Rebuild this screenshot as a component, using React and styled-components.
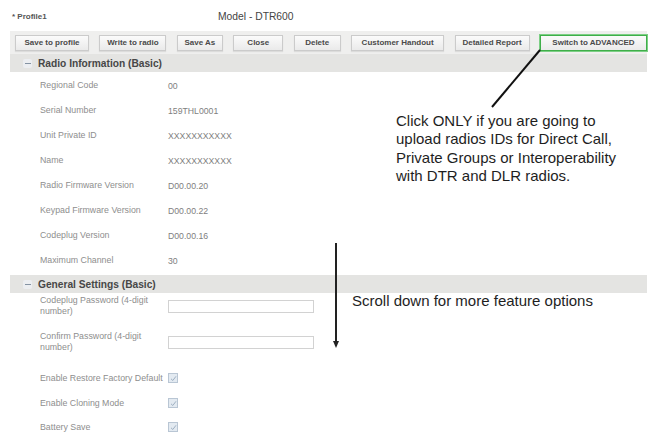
import React from "react";
import styled, { createGlobalStyle } from "styled-components";

const Global = createGlobalStyle`
  html, body { margin: 0; padding: 0; background: #ffffff; }
  body { font-family: "Liberation Sans", Arial, sans-serif; }
`;

const Page = styled.div`
  position: relative;
  width: 654px;
  height: 434px;
  overflow: hidden;
  background: #fff;
`;

const TitleRow = styled.div`
  display: grid;
  grid-template-columns: 206px auto;
  align-items: center;
  height: 31px;
  padding: 2px 0 0 12px;
  box-sizing: border-box;
`;

const ProfileName = styled.span`
  font-size: 8px;
  font-weight: bold;
  color: #555;
`;

const ModelName = styled.span`
  font-size: 10.3px;
  color: #444;
`;

const Content = styled.div`
  margin-left: 10px;
  width: 637px;
`;

const Toolbar = styled.div`
  display: flex;
  justify-content: space-between;
  align-items: center;
  height: 23px;
  padding: 0 0 0 5px;
  background: #efefee;
`;

const Button = styled.div`
  width: ${(p) => p.$w}px;
  height: 16px;
  box-sizing: border-box;
  display: flex;
  align-items: center;
  justify-content: center;
  font-size: 8px;
  font-weight: bold;
  color: #4a4a4a;
  background: linear-gradient(#fbfbfb, #eaeaea);
  border: 1px solid ${(p) => (p.$active ? "#3fae4a" : "#cbcbcb")};
  box-shadow: ${(p) => (p.$active ? "0 0 0 1px #7ccf84" : "0 1px 1px rgba(0,0,0,0.08)")};
  white-space: nowrap;
`;

const SectionHeader = styled.div`
  display: flex;
  align-items: center;
  gap: 6px;
  height: 18px;
  padding-left: 13px;
  background: #e4e4e2;
  font-size: 10.2px;
  font-weight: bold;
  color: #474747;
`;

const Toggle = styled.span`
  width: 9px;
  height: 9px;
  display: flex;
  align-items: center;
  justify-content: center;
  border-radius: 2px;
  background: #eceef1;
  &::after {
    content: "";
    width: 6px;
    height: 1px;
    background: #8593a3;
  }
`;

const Rows = styled.div`
  display: grid;
  grid-template-columns: 128px 1fr;
  grid-auto-rows: 25px;
  padding: 1px 0 2px 30px;
`;

const Label = styled.div`
  display: flex;
  align-items: center;
  font-size: 8.8px;
  line-height: 11px;
  color: #8e8e8e;
`;

const Value = styled.div`
  display: flex;
  align-items: center;
  font-size: 8.7px;
  color: #7e7e7e;
`;

const SettingsRows = styled.div`
  display: grid;
  grid-template-columns: 128px 1fr;
  grid-template-rows: 26px 46px 26px 24px 24px;
  padding-left: 30px;
`;

const WrapLabel = styled(Label)`
  padding-right: 14px;
`;

const Field = styled.div`
  display: flex;
  align-items: center;
`;

const TextInput = styled.div`
  width: 146px;
  height: 13px;
  box-sizing: border-box;
  border: 1px solid #d2d2d2;
  background: #fff;
`;

const Check = styled.div`
  width: 10px;
  height: 10px;
  box-sizing: border-box;
  border: 1px solid #b9c6d4;
  background: #e3eaf1;
  display: flex;
  align-items: center;
  justify-content: center;
`;

const Overlay = styled.svg`
  position: absolute;
  left: 0;
  top: 0;
  pointer-events: none;
`;

const Note = styled.div`
  position: absolute;
  left: ${(p) => p.$x}px;
  top: ${(p) => p.$y}px;
  font-size: 15px;
  line-height: 18.3px;
  color: #1e1e1e;
  white-space: nowrap;
`;

const buttons = [
  { t: "Save to profile", w: 74 },
  { t: "Write to radio", w: 67 },
  { t: "Save As", w: 46 },
  { t: "Close", w: 50 },
  { t: "Delete", w: 47 },
  { t: "Customer Handout", w: 93 },
  { t: "Detailed Report", w: 75 },
  { t: "Switch to ADVANCED", w: 107, active: true },
];

const info = [
  ["Regional Code", "00"],
  ["Serial Number", "159THL0001"],
  ["Unit Private ID", "XXXXXXXXXXX"],
  ["Name", "XXXXXXXXXXX"],
  ["Radio Firmware Version", "D00.00.20"],
  ["Keypad Firmware Version", "D00.00.22"],
  ["Codeplug Version", "D00.00.16"],
  ["Maximum Channel", "30"],
];

const CheckMark = () => (
  <svg width="7" height="7" viewBox="0 0 7 7">
    <path d="M1 3.8 L2.8 5.5 L6 1.3" fill="none" stroke="#9fb0c2" strokeWidth="1" />
  </svg>
);

export default function App() {
  return (
    <Page>
      <Global />
      <TitleRow>
        <ProfileName>* Profile1</ProfileName>
        <ModelName>Model - DTR600</ModelName>
      </TitleRow>
      <Content>
        <Toolbar>
          {buttons.map((b) => (
            <Button key={b.t} $w={b.w} $active={b.active}>
              {b.t}
            </Button>
          ))}
        </Toolbar>
        <SectionHeader>
          <Toggle />
          Radio Information (Basic)
        </SectionHeader>
        <Rows>
          {info.map(([l, v]) => (
            <React.Fragment key={l}>
              <Label>{l}</Label>
              <Value>{v}</Value>
            </React.Fragment>
          ))}
        </Rows>
        <SectionHeader>
          <Toggle />
          General Settings (Basic)
        </SectionHeader>
        <SettingsRows>
          <WrapLabel>Codeplug Password (4-digit number)</WrapLabel>
          <Field>
            <TextInput />
          </Field>
          <WrapLabel>Confirm Password (4-digit number)</WrapLabel>
          <Field>
            <TextInput />
          </Field>
          <Label>Enable Restore Factory Default</Label>
          <Field>
            <Check>
              <CheckMark />
            </Check>
          </Field>
          <Label>Enable Cloning Mode</Label>
          <Field>
            <Check>
              <CheckMark />
            </Check>
          </Field>
          <Label>Battery Save</Label>
          <Field>
            <Check>
              <CheckMark />
            </Check>
          </Field>
        </SettingsRows>
      </Content>

      <Overlay width="654" height="434" viewBox="0 0 654 434">
        <line x1="540" y1="50" x2="492" y2="107" stroke="#111" strokeWidth="2" />
        <line x1="336" y1="243" x2="336" y2="343" stroke="#222" strokeWidth="2" />
        <path d="M333 341 L339 341 L336 348 Z" fill="#222" />
      </Overlay>
      <Note $x={396} $y={112}>
        Click ONLY if you are going to
        <br />
        upload radios IDs for Direct Call,
        <br />
        Private Groups or Interoperability
        <br />
        with DTR and DLR radios.
      </Note>
      <Note $x={352} $y={292}>
        Scroll down for more feature options
      </Note>
    </Page>
  );
}
